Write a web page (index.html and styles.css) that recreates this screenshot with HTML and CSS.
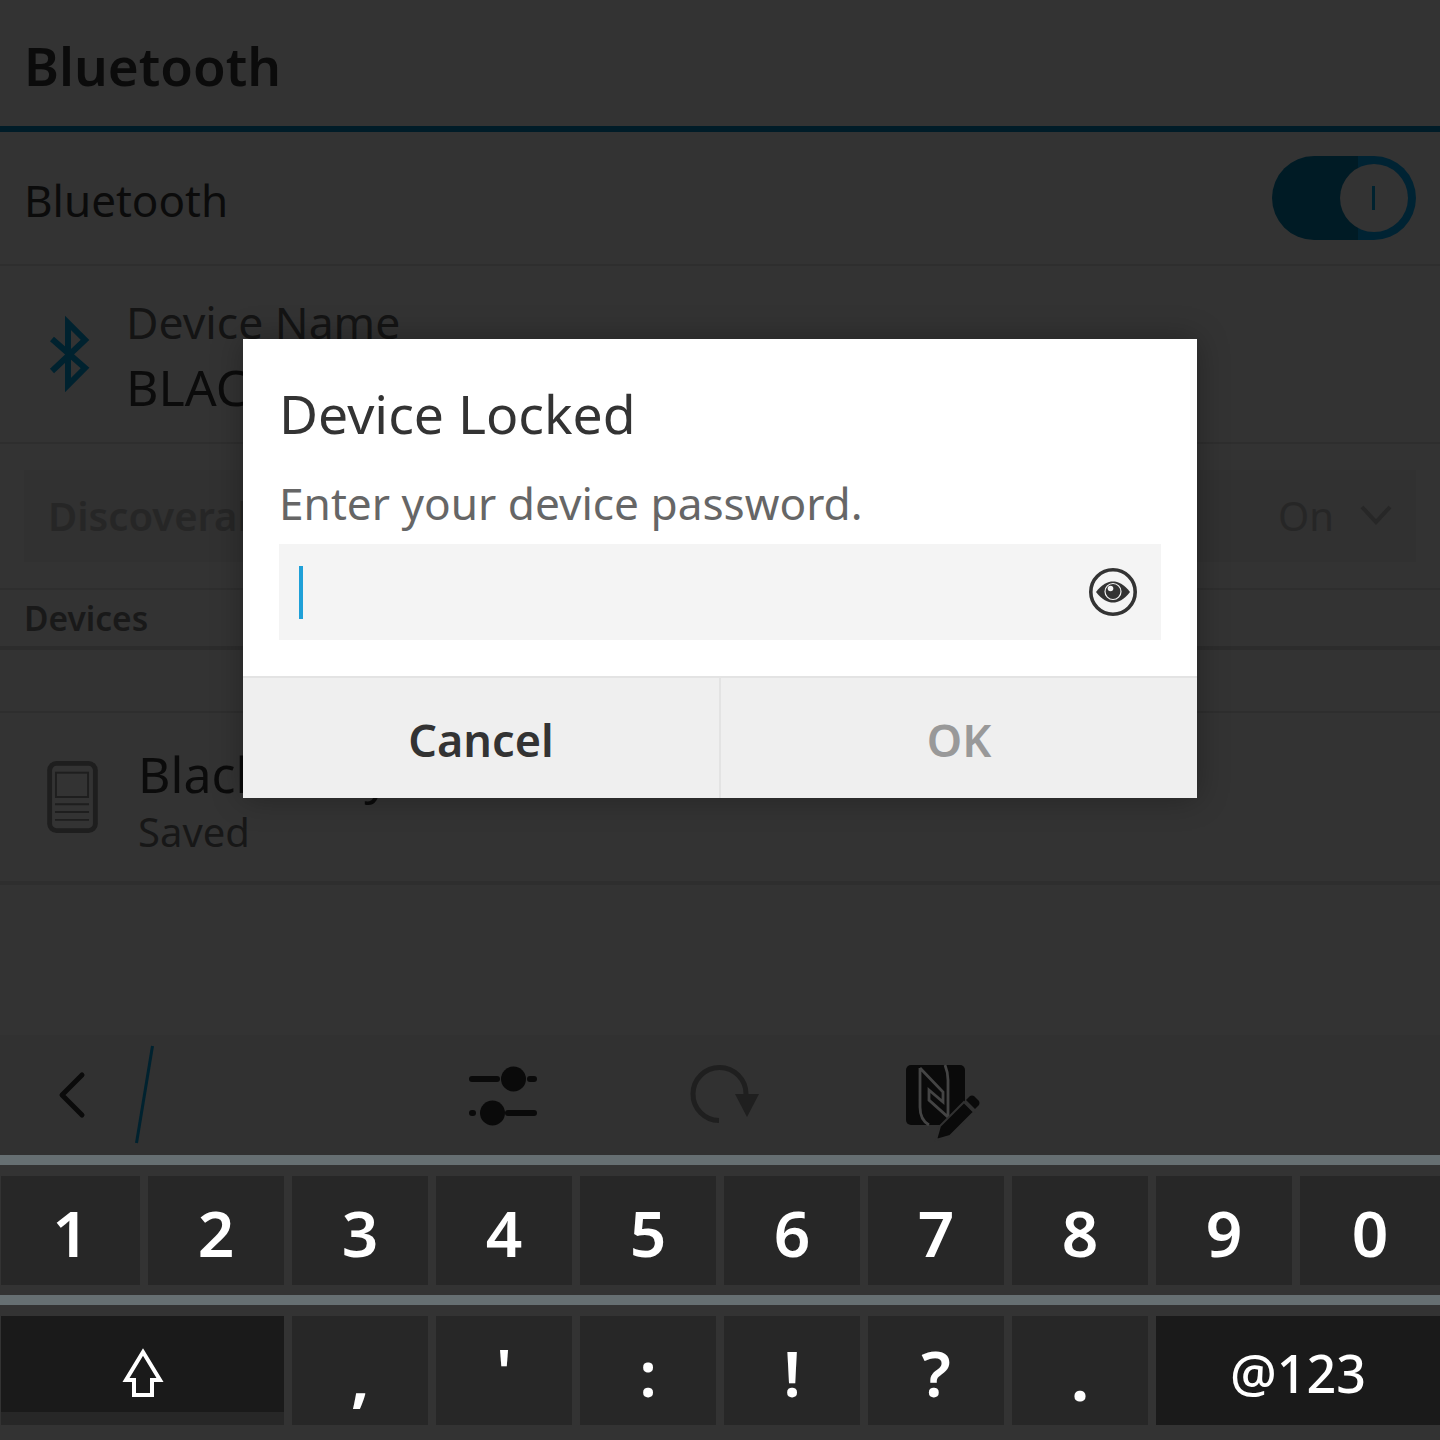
FILE: index.html
```html
<!DOCTYPE html>
<html lang="en">
<head>
  <meta charset="UTF-8" />
  <title>Bluetooth</title>
  <link rel="stylesheet" href="styles.css">
</head>
<body>
  <div class="screen">
    <div class="title-bar"><h1>Bluetooth</h1></div>

    <div class="row toggle-row">
      <span class="row-label">Bluetooth</span>
      <div class="toggle">
        <div class="toggle-knob"><span></span></div>
      </div>
    </div>

    <div class="row name-row">
      <svg class="bt-icon" width="48" height="80" viewBox="46 314 48 80">
        <path d="M52 339 L85 368 L68 385 V323 L85 340 L52 371" fill="none" stroke="#00222f" stroke-width="6"/>
      </svg>
      <div class="name-text">
        <div class="name-label">Device Name</div>
        <div class="name-value">BLACKBERRY</div>
      </div>
    </div>

    <div class="row disc-row">
      <div class="dropdown">
        <span class="dropdown-label">Discoverable</span>
        <span class="dropdown-value">On</span>
        <svg width="32" height="20" viewBox="0 0 32 20">
          <path d="M2 2 L16 17 L30 2" fill="none" stroke="#272727" stroke-width="4"/>
        </svg>
      </div>
    </div>

    <div class="section-head">Devices</div>
    <div class="section-gap"></div>

    <div class="row device-row">
      <svg class="device-icon" width="51" height="72" viewBox="0 0 52 74">
        <rect x="2.5" y="2.5" width="47" height="69" rx="7" fill="none" stroke="#1e1e1e" stroke-width="5"/>
        <rect x="9" y="12" width="33" height="25" fill="none" stroke="#1e1e1e" stroke-width="2"/>
        <path d="M8 44.5 H43 M8 52.5 H43 M8 60.5 H43" stroke="#1e1e1e" stroke-width="2"/>
      </svg>
      <div class="device-text">
        <div class="device-name">BlackBerry</div>
        <div class="device-status">Saved</div>
      </div>
    </div>

    <div class="spacer"></div>

    <div class="toolbar">
      <svg width="1020" height="120" viewBox="0 1035 1020 120">
        <path d="M82 1075 L62 1095 L82 1115" fill="none" stroke="#0a0a0a" stroke-width="5" stroke-linecap="round" stroke-linejoin="round"/>
        <path d="M152.5 1046 L136.500 1143" stroke="#00222f" stroke-width="3"/>
        <path d="M472 1079 H497 M530 1079 H534 M472 1113 H473 M508 1113 H534" stroke="#0a0a0a" stroke-width="6" stroke-linecap="round"/>
        <circle cx="513.500" cy="1079" r="12.500" fill="#0a0a0a"/>
        <circle cx="492.500" cy="1113" r="12.500" fill="#0a0a0a"/>
        <path d="M719 1120.500 A26.500 26.500 0 1 1 746 1094" fill="none" stroke="#1f1f1f" stroke-width="5"/>
        <path d="M735 1094 H759 L747 1117 Z" fill="#1f1f1f"/>
        <g transform="translate(880 1050)">
          <rect x="26" y="15" width="59" height="60" rx="5" fill="#0a0a0a"/>
          <path d="M40 18 L63 42 V52 L49 40 V50 L68 67 V30 C68 24 67 20 65 15 M40 18 V57 C40 65 42 71 49 75" fill="none" stroke="#444" stroke-width="2.800"/>
          <path d="M56 90 L60 76 L84 52 L94 62 L70 86 Z" fill="#0a0a0a" stroke="#313131" stroke-width="2"/>
          <path d="M86 50 L90 46 Q92 45 94 46 L99 51 Q100 53 99 55 L95 59 Z" fill="#0a0a0a"/>
        </g>
      </svg>
    </div>

    <div class="kb-rule"></div>
    <div class="keys">
      <div class="key">1</div>
      <div class="key">2</div>
      <div class="key">3</div>
      <div class="key">4</div>
      <div class="key">5</div>
      <div class="key">6</div>
      <div class="key">7</div>
      <div class="key">8</div>
      <div class="key">9</div>
      <div class="key">0</div>
    </div>
    <div class="kb-rule second"></div>
    <div class="keys">
      <div class="key wide shift">
        <div class="shift-top">
          <svg width="44" height="50" viewBox="0 0 44 50">
            <path d="M22 4 L39 32 H31 V47 H13 V32 H5 Z" fill="none" stroke="#fff" stroke-width="4"/>
          </svg>
        </div>
      </div>
      <div class="key low">,</div>
      <div class="key high">'</div>
      <div class="key">:</div>
      <div class="key">!</div>
      <div class="key">?</div>
      <div class="key low">.</div>
      <div class="key wide dark">@123</div>
    </div>
    <div class="kb-foot"></div>
  </div>

  <div class="dialog">
    <h2>Device Locked</h2>
    <p>Enter your device password.</p>
    <div class="field">
      <span class="caret"></span>
      <svg width="50" height="50" viewBox="0 0 50 50">
        <circle cx="25" cy="25" r="22.200" fill="none" stroke="#333" stroke-width="3.600"/>
        <path d="M8 25 C14 17 20 14.500 25 14.500 C30 14.500 36 17 42 25 C36 33 30 35.500 25 35.500 C20 35.500 14 33 8 25 Z" fill="#333"/>
        <circle cx="25" cy="24.500" r="8" fill="#333" stroke="#f4f4f4" stroke-width="1.200"/>
        <circle cx="22.500" cy="21.500" r="2.800" fill="#f4f4f4"/>
      </svg>
    </div>
    <div class="dialog-buttons">
      <div class="btn">Cancel</div>
      <div class="btn off">OK</div>
    </div>
  </div>
</body>
</html>
```

FILE: styles.css
```css
body {
  margin: 0;
  font-family: 'Noto Sans', sans-serif;
  background: #333;
  overflow: hidden;
}

.screen {
  width: 1440px;
  height: 1440px;
  display: flex;
  flex-direction: column;
}

.title-bar {
  height: 126px;
  border-bottom: 6px solid #001c28;
  display: flex;
  align-items: center;
  padding: 0 24px;
  flex-shrink: 0;
}

h1 {
  margin: 0;
  font-size: 53px;
  font-weight: 600;
  color: #0b0b0b;
  position: relative;
  top: 2px;
}

.row {
  display: flex;
  align-items: center;
  border-bottom: 2px solid #2e2e2e;
  box-sizing: border-box;
  flex-shrink: 0;
}

.toggle-row {
  height: 134px;
  padding: 0 24px;
  justify-content: space-between;
}

.row-label {
  font-size: 44px;
  color: #0b0b0b;
  padding-top: 4px;
}

.toggle {
  width: 144px;
  height: 84px;
  border-radius: 42px;
  background: linear-gradient(to right, #001b25 60%, #002333 60%);
  display: flex;
  align-items: center;
  justify-content: flex-end;
  padding-right: 8px;
  box-sizing: border-box;
}

.toggle-knob {
  width: 68px;
  height: 68px;
  border-radius: 50%;
  background: #333;
  display: flex;
  align-items: center;
  justify-content: center;
}

.toggle-knob span {
  width: 3px;
  height: 24px;
  background: #00222f;
  margin-left: -2px;
}

.name-row {
  height: 178px;
  padding-left: 46px;
}

.bt-icon {
  flex-shrink: 0;
}

.name-text {
  margin-left: 32px;
  padding-top: 5px;
}

.name-label {
  font-size: 44.5px;
  line-height: 60px;
  color: #141414;
}

.name-value {
  font-size: 50px;
  line-height: 70px;
  color: #0b0b0b;
}

.disc-row {
  height: 146px;
  padding: 0 24px;
}

.dropdown {
  width: 100%;
  height: 92px;
  background: #313131;
  display: flex;
  align-items: center;
  padding: 0 24px 2px;
  box-sizing: border-box;
  font-size: 40px;
}

.dropdown-label {
  font-weight: 600;
  color: #262626;
  flex: 1;
}

.dropdown-value {
  color: #262626;
  margin-right: 26px;
}

.section-head {
  height: 60px;
  border-bottom: 4px solid #2c2c2c;
  padding: 6px 24px 0;
  font-size: 33.5px;
  font-weight: 600;
  line-height: 44px;
  color: #191919;
  box-sizing: border-box;
  flex-shrink: 0;
}

.section-gap {
  height: 63px;
  border-bottom: 2px solid #2e2e2e;
  flex-shrink: 0;
  box-sizing: border-box;
}

.device-row {
  height: 172px;
  padding-left: 47px;
  border-bottom-width: 4px;
}

.device-text {
  margin-left: 40px;
  padding-top: 3px;
}

.device-name {
  font-size: 50px;
  line-height: 66px;
  color: #0b0b0b;
}

.device-status {
  font-size: 40px;
  line-height: 50px;
  color: #171717;
}

.spacer {
  flex: 1;
}

.toolbar {
  height: 120px;
  background: #313131;
  flex-shrink: 0;
}

.toolbar svg {
  display: block;
}

.kb-rule {
  height: 10px;
  background: #666f72;
  margin-bottom: 11px;
  flex-shrink: 0;
}

.kb-rule.second {
  margin-top: 10px;
}

.keys {
  display: grid;
  grid-template-columns: 139px repeat(8, 136px) 140px;
  column-gap: 8px;
  padding-left: 1px;
  height: 109px;
  flex-shrink: 0;
}

.key {
  background: #272727;
  color: #fff;
  font-size: 64px;
  font-weight: 600;
  line-height: 113px;
  text-align: center;
  height: 109px;
  overflow: hidden;
}

.key.wide {
  grid-column: span 2;
}

.key.dark {
  background: #1a1a1a;
  font-size: 52px;
  font-weight: 500;
}

.shift-top {
  height: 96px;
  background: #1a1a1a;
  display: flex;
  align-items: center;
  justify-content: center;
}

.shift-top svg {
  position: relative;
  top: 9px;
}

.key.low {
  font-weight: 700;
  line-height: 122px;
}

.key.high {
  line-height: 110px;
}

.kb-foot {
  height: 15px;
}

.dialog {
  position: absolute;
  left: 243px;
  top: 339px;
  width: 954px;
  height: 459px;
  background: #fff;
  box-shadow: 0 0 30px rgba(0, 0, 0, 0.3);
  display: flex;
  flex-direction: column;
}

.dialog h2 {
  margin: 37px 0 0 36px;
  font-size: 53.5px;
  font-weight: 400;
  line-height: 76px;
  color: #333;
}

.dialog p {
  margin: 21px 0 0 36px;
  font-size: 44.2px;
  line-height: 60px;
  color: #666;
}

.field {
  margin: 11px 36px 0;
  height: 96px;
  background: #f4f4f4;
  display: flex;
  align-items: center;
  justify-content: space-between;
  padding: 0 23px 0 20px;
}

.caret {
  width: 4px;
  height: 53px;
  background: #1fa0d8;
}

.dialog-buttons {
  margin-top: auto;
  height: 122px;
  border-top: 2px solid #e3e3e3;
  background: #efefef;
  display: grid;
  grid-template-columns: 476px 1fr;
  box-sizing: border-box;
}

.btn {
  display: flex;
  align-items: center;
  justify-content: center;
  font-size: 45px;
  font-weight: 600;
  color: #333;
  padding-top: 2px;
}

.btn.off {
  color: #999;
  border-left: 2px solid #e3e3e3;
}
```
